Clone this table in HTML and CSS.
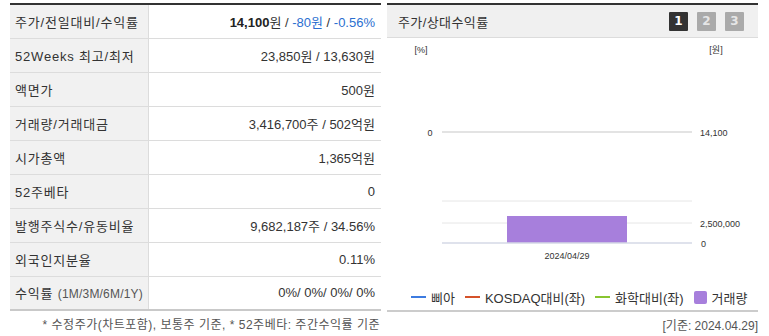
FILE: index.html
```html
<!DOCTYPE html>
<html lang="ko">
<head>
<meta charset="utf-8">
<link rel="stylesheet" href="styles.css">
</head>
<body>
<div class="page">
  <section class="left">
    <table class="info">
      <tr><th>주가/전일대비/수익률</th><td><b>14,100</b>원 / <span class="down">-80원</span> / <span class="down">-0.56%</span></td></tr>
      <tr><th>52Weeks 최고/최저</th><td>23,850원 / 13,630원</td></tr>
      <tr><th>액면가</th><td>500원</td></tr>
      <tr><th>거래량/거래대금</th><td>3,416,700주 / 502억원</td></tr>
      <tr><th>시가총액</th><td>1,365억원</td></tr>
      <tr><th>52주베타</th><td>0</td></tr>
      <tr><th>발행주식수/유동비율</th><td>9,682,187주 / 34.56%</td></tr>
      <tr><th>외국인지분율</th><td>0.11%</td></tr>
      <tr><th>수익률 <span class="sub">(1M/3M/6M/1Y)</span></th><td>0%/ 0%/ 0%/ 0%</td></tr>
    </table>
    <p class="note">* 수정주가(차트포함), 보통주 기준, * 52주베타: 주간수익률 기준</p>
  </section>
  <section class="right">
    <div class="head">
      <h2>주가/상대수익률</h2>
      <div class="tabs">
        <span class="tab on">1</span>
        <span class="tab">2</span>
        <span class="tab">3</span>
      </div>
    </div>
    <svg class="chart" width="371" height="240" viewBox="0 0 371 240">
      <text x="34" y="15" class="lab" text-anchor="middle">[%]</text>
      <text x="329" y="15" class="lab" text-anchor="middle">[원]</text>
      <text x="43" y="98" class="lab" text-anchor="middle">0</text>
      <line x1="55" y1="94" x2="305" y2="94" stroke="#e3e3e3" stroke-width="2"/>
      <text x="313" y="98" class="lab">14,100</text>
      <line x1="55" y1="163" x2="305" y2="163" stroke="#e6e6e6" stroke-width="1"/>
      <line x1="55" y1="185" x2="305" y2="185" stroke="#e6e6e6" stroke-width="1"/>
      <rect x="120" y="178" width="120" height="27" fill="#a77fdc"/>
      <line x1="55" y1="205" x2="305" y2="205" stroke="#d5d9e6" stroke-width="1.5"/>
      <text x="313" y="189" class="lab">2,500,000</text>
      <text x="314" y="209" class="lab">0</text>
      <text x="180" y="221" class="lab" text-anchor="middle">2024/04/29</text>
    </svg>
    <ul class="legend">
      <li><i class="ln blue"></i>삐아</li>
      <li><i class="ln red"></i>KOSDAQ대비(좌)</li>
      <li><i class="ln green"></i>화학대비(좌)</li>
      <li><i class="sq"></i>거래량</li>
    </ul>
    <p class="date">[기준: 2024.04.29]</p>
  </section>
</div>
</body>
</html>
```
FILE: styles.css
```css
* { box-sizing: border-box; }
html, body { margin: 0; padding: 0; background: #fff; }
body {
  font-family: "Liberation Sans", "Noto Sans CJK KR", sans-serif;
  color: #333;
}
.page {
  display: flex;
  gap: 6px;
  padding: 3px 0 0 10px;
}
.left { width: 371px; }
.info {
  width: 100%;
  border-collapse: collapse;
  border-top: 2px solid #333;
  border-bottom: 2px solid #c9c9c9;
  font-size: 13px;
}
.info th, .info td {
  height: 34px;
  padding: 0 5px;
  border-bottom: 1px solid #dcdcdc;
  font-weight: normal;
  white-space: nowrap;
}
.info tr:last-child th, .info tr:last-child td { border-bottom: 0; }
.info th {
  width: 137px;
  text-align: left;
  background: #f1f1f1;
  border-right: 1px solid #dcdcdc;
  letter-spacing: 0.8px;
}
.info td { text-align: right; padding-right: 6px; }
.info b { font-weight: bold; color: #222; }
.down { color: #2b6fd0; }
.sub { font-size: 12px; color: #555; letter-spacing: 0.2px; }
.note {
  margin: 4px 1px 0 0;
  text-align: right;
  font-size: 12px;
  color: #555;
  letter-spacing: 0.5px;
}
.right { width: 371px; }
.head {
  display: flex;
  align-items: center;
  justify-content: space-between;
  height: 35px;
  background: #f0f0f0;
  border-top: 2px solid #333;
  border-bottom: 1px solid #dcdcdc;
  padding: 0 14px 0 11px;
}
.head h2 { margin: 0; font-size: 13px; font-weight: normal; color: #333; letter-spacing: 0.4px; }
.tabs { display: flex; gap: 9px; }
.tab {
  width: 19px; height: 19px;
  display: flex; align-items: center; justify-content: center;
  background: #aaa; color: #e6e6e6;
  font-family: "DejaVu Sans", sans-serif;
  font-weight: bold; font-size: 12px;
  border-radius: 1px;
}
.tab.on { background: #333; color: #fff; }
.chart { display: block; }
.lab { font-family: "Liberation Sans", "Noto Sans CJK KR", sans-serif; font-size: 9px; fill: #333; }
.legend {
  list-style: none;
  margin: 8px 0 0 0;
  padding: 0 0 0 24px;
  display: flex;
  gap: 10px;
  font-size: 13px;
  color: #333;
  height: 22px;
  align-items: center;
}
.legend li { display: flex; align-items: center; gap: 5px; }
.ln { display: inline-block; width: 15px; height: 2px; }
.blue { background: #3d7be0; }
.red { background: #d5522a; }
.green { background: #88c530; }
.sq { display: inline-block; width: 13px; height: 13px; background: #a77fdc; border-radius: 2px; }
.date {
  margin: 2px 0 0;
  border-top: 2px solid #ccc;
  padding-top: 4px;
  text-align: right;
  font-size: 12px;
  color: #555;
}
```
